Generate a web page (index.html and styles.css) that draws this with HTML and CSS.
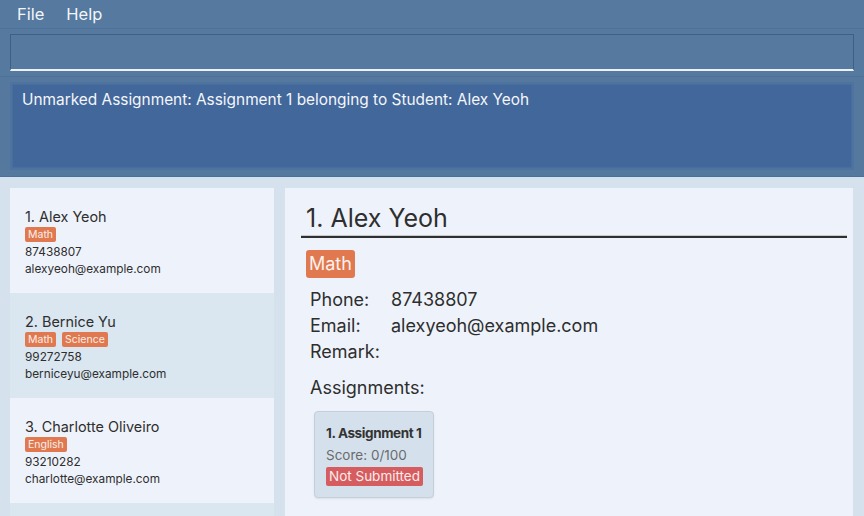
FILE: index.html
```html
<!DOCTYPE html>
<html>
<head>
<meta charset="utf-8">
<link rel="stylesheet" href="styles.css">
</head>
<body>
<div class="app">
  <div class="menubar">
    <span class="menu">File</span>
    <span class="menu">Help</span>
  </div>
  <div class="command">
    <div class="field"></div>
  </div>
  <div class="result">
    <div class="result-box">Unmarked Assignment: Assignment 1 belonging to Student: Alex Yeoh</div>
  </div>
  <div class="main">
    <div class="list">
      <div class="card">
        <div class="name">1. Alex Yeoh</div>
        <div class="tags"><span class="tag">Math</span></div>
        <div class="line">87438807</div>
        <div class="line">alexyeoh@example.com</div>
      </div>
      <div class="card alt">
        <div class="name">2. Bernice Yu</div>
        <div class="tags"><span class="tag">Math</span><span class="tag">Science</span></div>
        <div class="line">99272758</div>
        <div class="line">berniceyu@example.com</div>
      </div>
      <div class="card">
        <div class="name">3. Charlotte Oliveiro</div>
        <div class="tags"><span class="tag">English</span></div>
        <div class="line">93210282</div>
        <div class="line">charlotte@example.com</div>
      </div>
      <div class="card alt"></div>
    </div>
    <div class="detail">
      <div class="d-name">1. Alex Yeoh</div>
      <div class="d-tags"><span class="d-tag">Math</span></div>
      <div class="fields">
        <span class="label">Phone:</span><span>87438807</span>
        <span class="label">Email:</span><span>alexyeoh@example.com</span>
        <span class="label">Remark:</span><span></span>
      </div>
      <div class="a-title">Assignments:</div>
      <div class="a-card">
        <div class="a-name">1. Assignment 1</div>
        <div class="a-score">Score: 0/100</div>
        <span class="a-badge">Not Submitted</span>
      </div>
    </div>
  </div>
</div>
</body>
</html>
```

FILE: styles.css
```css
* { box-sizing: border-box; }
html, body { margin: 0; padding: 0; }
body {
  width: 864px;
  height: 516px;
  overflow: hidden;
  font-family: Inter, "Open Sans", sans-serif;
  background: #d5e2ee;
}
.app { display: flex; flex-direction: column; height: 516px; }
.menubar {
  height: 29px;
  background: #55799f;
  border-bottom: 1px solid #4e719a;
  display: flex;
  align-items: center;
  padding-left: 17px;
  gap: 22px;
  color: #f2f5f9;
  font-size: 16.5px;
}
.command {
  background: #55799f;
  padding: 5px 10px 5px 10px;
  border-bottom: 1px solid #4e719a;
  height: 48px;
}
.field {
  height: 37px;
  border: 1px solid #3f5f85;
  border-bottom: 2px solid #eef2f7;
  background: #56799f;
  width: 844px;
}
.result {
  background: #55789f;
  padding: 5px 10px 6px 10px;
  height: 100px;
  border-bottom: 1px solid #4b6f9b;
}
.result-box {
  height: 88px;
  width: 844px;
  border: 2px solid #4f73a0;
  background: #42679a;
  color: #f4f6fa;
  font-size: 15.4px;
  padding: 6px 10px;
  box-shadow: inset 0 0 0 1px #4a6e9c;
}
.main {
  flex: 1;
  display: flex;
  gap: 11px;
  padding: 11px 11px 0 10px;
  min-height: 0;
}
.list {
  width: 264px;
  display: flex;
  flex-direction: column;
  overflow: hidden;
  position: relative;
}
.card {
  height: 105px;
  flex: none;
  background: #eef3fb;
  padding: 19px 15px 0 15px;
  color: #2e2e2e;
}
.card.alt { background: #dae6f0; }
.name { font-size: 14.4px; line-height: 19px; }
.tags { display: flex; gap: 6px; margin-top: 1px; }
.tag {
  background: #e07950;
  color: #fbeee8;
  font-size: 10.5px;
  line-height: 15px;
  padding: 0 3px;
  border-radius: 2px;
}
.line { font-size: 11.8px; line-height: 17px; }
.tags + .line { margin-top: 2px; }
.detail {
  width: 568px;
  background: #eef3fb;
  padding: 12px 6px 0 16px;
  color: #2e2e2e;
}
.d-name {
  font-size: 25px;
  line-height: 36px;
  padding-left: 5px;
  border-bottom: 2px solid #2f2f2f;
  box-shadow: 0 -1px 0 #c8c8c8 inset;
  height: 38px;
}
.d-tags { margin-top: 12px; display: flex; padding-left: 5px; }
.d-tag {
  background: #e07950;
  color: #fdf1ec;
  font-size: 18px;
  line-height: 28px;
  padding: 0 3px;
  border-radius: 3px;
}
.fields {
  display: grid;
  grid-template-columns: 81px auto;
  font-size: 18px;
  line-height: 26px;
  margin-top: 9px;
  padding-left: 9px;
}
.a-title { font-size: 18px; line-height: 26px; margin-top: 10px; padding-left: 9px; }
.a-card {
  margin-top: 10px;
  margin-left: 13px;
  width: 120px;
  height: 87px;
  background: #d4e1ed;
  border: 1px solid #c6cfd7;
  border-radius: 4px;
  padding: 12px 10px 0 11px;
  box-shadow: 0 1px 2px rgba(0,0,0,0.08);
}
.a-name { font-size: 13.5px; font-weight: 700; color: #333; line-height: 18px; letter-spacing: -0.4px; }
.a-score { font-size: 13.5px; color: #6b6b6b; line-height: 18px; margin-top: 4px; }
.a-badge {
  display: inline-block;
  margin-top: 3px;
  background: #d65d5f;
  color: #fcecec;
  font-size: 13.5px;
  line-height: 19px;
  padding: 0 3px;
  border-radius: 2px;
}
```
